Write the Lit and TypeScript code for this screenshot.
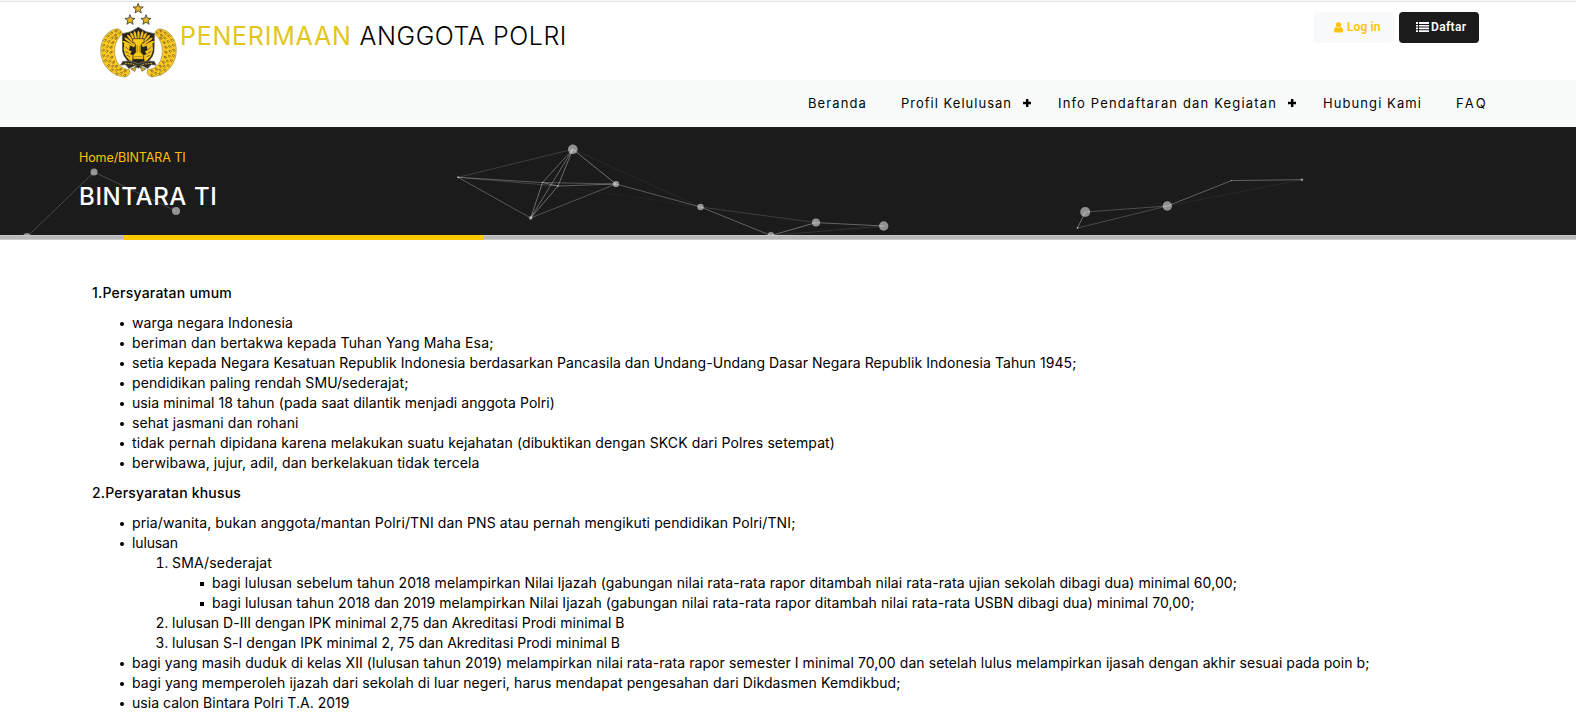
import { LitElement, html, css, svg } from "lit";
import { customElement, property } from "lit/decorators.js";

/** A single line of text whose tracking is adjusted to fill a given width. */
@customElement("fit-text")
class FitText extends LitElement {
  @property() text = "";
  @property({ type: Number }) width = 0;

  static styles = css`
    :host { display: inline-block; white-space: pre; }
    .t { display: inline-block; }
  `;

  updated() {
    const el = this.renderRoot.querySelector(".t") as HTMLElement;
    el.style.letterSpacing = "0px";
    const natural = el.getBoundingClientRect().width;
    el.style.letterSpacing = (this.width + 0.5 - natural) / this.text.length + "px";
  }

  render() {
    return html`<span class="t">${this.text}</span>`;
  }
}

const fit = (text: string, width: number) =>
  html`<fit-text .text=${text} .width=${width}></fit-text>`;

const general: [string, number][] = [
  ["warga negara Indonesia", 160.5],
  ["beriman dan bertakwa kepada Tuhan Yang Maha Esa;", 361],
  ["setia kepada Negara Kesatuan Republik Indonesia berdasarkan Pancasila dan Undang-Undang Dasar Negara Republik Indonesia Tahun 1945;", 944],
  ["pendidikan paling rendah SMU/sederajat;", 276],
  ["usia minimal 18 tahun (pada saat dilantik menjadi anggota Polri)", 422.5],
  ["sehat jasmani dan rohani", 166],
  ["tidak pernah dipidana karena melakukan suatu kejahatan (dibuktikan dengan SKCK dari Polres setempat)", 702.5],
  ["berwibawa, jujur, adil, dan berkelakuan tidak tercela", 347],
];

/* Particle network: x, y (relative to the banner), radius */
const nodes: [number, number, number][] = [
  [27, 110, 4], [94, 45, 3.5], [176, 84, 4],
  [572.8, 22.3, 4.8], [458, 50.3, 1], [616, 57, 3.1], [530.7, 91, 1.8],
  [542.5, 55.5, 0.6], [558, 59, 0.8], [700.5, 80, 3.2], [771, 108.5, 3.4],
  [816, 95.6, 4], [883.7, 99, 4.7],
  [1085.2, 85, 5], [1167.3, 79, 4.7], [1077.5, 101, 0.9], [1231.5, 53.6, 0.7], [1302, 52.7, 1.2],
];
const links: [number, number, number][] = [
  [0, 1, 0.2], [1, 2, 0.2],
  [4, 3, 0.15], [4, 7, 0.27], [4, 8, 0.18], [4, 6, 0.27], [3, 5, 0.37], [3, 7, 0.32],
  [3, 8, 0.36], [3, 6, 0.32], [6, 7, 0.36], [6, 8, 0.36], [6, 5, 0.25], [7, 5, 0.26],
  [8, 5, 0.3], [7, 8, 0.35], [5, 9, 0.28], [3, 9, 0.06], [8, 9, 0.03], [9, 11, 0.15],
  [9, 10, 0.3], [10, 11, 0.36], [10, 12, 0.11], [11, 12, 0.32],
  [13, 14, 0.22], [13, 15, 0.36], [15, 14, 0.2], [14, 16, 0.3], [16, 17, 0.3], [14, 17, 0.06],
];

const star = (cx: number, cy: number, r: number) => {
  const pts: string[] = [];
  for (let i = 0; i < 10; i++) {
    const a = (Math.PI / 5) * i - Math.PI / 2;
    const q = i % 2 ? r * 0.42 : r;
    pts.push(`${(cx + Math.cos(a) * q).toFixed(1)},${(cy + Math.sin(a) * q).toFixed(1)}`);
  }
  return svg`<polygon points=${pts.join(" ")} fill="#e5b622" stroke="#34332a" stroke-width="2.4"/>`;
};

/* Left branch; the right one is its mirror image. */
const branch = () => svg`
  <path d="M82 86C50 90 32 120 32 150C32 192 60 226 104 231C116 229 122 220 118 209C92 208 74 186 74 154C74 132 82 114 98 101Q94 88 82 86Z"
    fill="#fbc920" stroke="#8a7a45" stroke-width="1.6"/>
  ${[
    [78, 93], [88, 99], [64, 100], [76, 106], [54, 108], [66, 114], [78, 115], [45, 121], [56, 125], [68, 128],
    [40, 136], [51, 140], [63, 142], [39, 151], [50, 154], [63, 157], [40, 167], [52, 169], [65, 172], [46, 182],
    [58, 184], [70, 187], [55, 197], [67, 199], [79, 199], [66, 210], [79, 211], [91, 208], [80, 222], [93, 220],
    [105, 213], [104, 226],
  ].map(([x, y], i) => svg`<path d=${`M${x - 5} ${y + 2}q4 -7 9 -5q0 6 -6 7`} fill=${i % 3 ? "#ffcf2c" : "#d9a824"} stroke="#4a4225" stroke-width="1.5"/>`)}
`;

const emblem = html`
  <svg class="emblem" viewBox="0 0 300 246" aria-hidden="true">
    ${star(144.5, 26, 16)}${star(120, 60, 16)}${star(168, 60, 16)}
    ${branch()}
    <g transform="translate(291 0) scale(-1 1)">${branch()}</g>
    <path d="M97 101Q122 99 145 82Q168 99 193 101L192 155Q187 184 145 202Q103 184 98 155Z" fill="#25241e" stroke="#4d4937" stroke-width="2"/>
    ${[-66, -53, -40, -27, -14, 0, 14, 27, 40, 53, 66].map(
      (d) => svg`<path d="M143.2 132L142 98L145.5 91L149 98L147.8 132Z" fill="#f2bd20" transform=${`rotate(${d} 145.5 145)`}/>`
    )}
    <path d="M103 124L120 137L117 151L125 154L120 163L130 166L126 185Q106 176 101 149ZM187 124L170 137L173 151L165 154L170 163L160 166L164 185Q184 176 189 149Z" fill="#f7c31f"/>
    <path d="M107 140L115 149M106 154L117 160M111 166L120 170M183 140L175 149M184 154L173 160M179 166L170 170" stroke="#2b2a20" stroke-width="1.8"/>
    <path d="M128 116H162V128H157L153 136V157L161 166V178H129V166L137 157V136L133 128H128Z" fill="#fdc920" stroke="#2a281e" stroke-width="2.2"/>
    <path d="M142 137V158M149 137V158M132 170H158" stroke="#93701b" stroke-width="2"/>
    <path d="M98 184Q121 179 145 191Q169 179 193 184L199 196L184 194L173 206L157 198L145 205L133 198L117 206L106 194L91 196Z" fill="#34332a" stroke="#8c8570" stroke-width="1.8"/>
    <path d="M105 190L128 192L139 197M186 190L162 192L151 197" stroke="#d5ab2a" stroke-width="3" fill="none" stroke-dasharray="5 3"/>
    <path d="M123 207L139 201L134 214ZM167 207L151 201L156 214Z" fill="#e8b71f" stroke="#57502f" stroke-width="2"/>
  </svg>
`;

const plus = html`<svg class="plus" viewBox="0 0 8 8"><path d="M3 0h2.4v2.8H8v2.4H5.4V8H3V5.2H0V2.8h3z"/></svg>`;

@customElement("app-root")
class AppRoot extends LitElement {
  static styles = css`
    :host {
      display: block;
      height: 712px;
      overflow: hidden;
      background: #fff;
      color: #000;
      font-family: Inter, "Open Sans", sans-serif;
      font-size: 14px;
      line-height: 20px;
    }
    .top {
      box-sizing: border-box;
      height: 80px;
      padding: 0 97px 0 90px;
      display: flex;
      align-items: flex-start;
      background: linear-gradient(#f8f9f9 1px, #dedfdf 1px, #dedfdf 2px, #fff 2px);
    }
    .emblem { display: block; width: 100px; height: 82px; flex: none; margin-right: -10px; }
    .brand {
      display: flex;
      gap: 8px;
      padding-top: 21px;
      font-size: 25px;
      font-weight: 300;
      line-height: 31px;
    }
    .gold { color: #e2c61d; font-weight: 400; }
    .buttons { display: flex; gap: 5px; margin-left: auto; padding-top: 12px; }
    .btn {
      box-sizing: border-box;
      width: 80px;
      height: 31px;
      border-radius: 4px;
      display: flex;
      align-items: center;
      font: 600 12px/31px Roboto, sans-serif;
    }
    .login { background: #f8f9fa; color: #ffc107; padding-left: 20px; gap: 4px; }
    .register { background: #1b1b1b; color: #fff; padding-left: 17px; gap: 2px; }
    .btn svg { display: block; fill: currentColor; }
    .nav {
      box-sizing: border-box;
      height: 47px;
      background: #f8faf9;
      display: flex;
      justify-content: flex-end;
      align-items: center;
      gap: 34px;
      padding: 0 88px 1px 0;
      font-size: 13px;
      color: #050505;
    }
    .item { display: flex; align-items: center; gap: 11px; }
    .plus { width: 8px; height: 8px; display: block; fill: #000; margin: 0 -7px 0 0; }
    .banner {
      height: 108px;
      box-sizing: border-box;
      padding: 21px 0 0 79px;
      background: #1b1b1b;
      position: relative;
      overflow: hidden;
      color: #fff;
    }
    .net { position: absolute; inset: 0; width: 1576px; height: 108px; }
    .crumb { position: relative; color: #ffc107; font-size: 12.5px; line-height: 20px; }
    .title { position: relative; margin: 13px 0 0 0; font-size: 24px; line-height: 32px; font-weight: 500; }
    .bar {
      height: 5px;
      background: linear-gradient(#c9c9c9 1px, #b8b8b8 1px, #b8b8b8 4px, #cdcdcd 4px);
      display: flex;
      padding-left: 123px;
    }
    .fill { width: 360px; background: #ffc800; }
    .content { padding: 43px 92px 0; }
    h4 { margin: 0 0 10px; font-size: 14px; font-weight: 500; line-height: 20px; }
    ul, ol { margin: 0; padding-left: 40px; }
    ul { list-style: none; }
    .content > ul { margin-bottom: 10px; }
    ul > li::before {
      content: "";
      display: inline-block;
      width: 4px;
      height: 4px;
      margin: 9px 8px 0 -12px;
      border-radius: 50%;
      background: #000;
      vertical-align: top;
    }
    .square > li::before { margin: 9px 8px 0 -12px; border-radius: 0; }
    .content fit-text { vertical-align: top; height: 20px; }
  `;

  render() {
    return html`
      <header class="top">
        ${emblem}
        <div class="brand">
          <span class="gold">${fit("PENERIMAAN", 171)}</span>
          <span>${fit("ANGGOTA POLRI", 207)}</span>
        </div>
        <div class="buttons">
          <a class="btn login">
            <svg width="9" height="11" viewBox="0 0 9 11"><circle cx="4.5" cy="2.8" r="2.6" /><path d="M2 5Q4.5 7 7 5Q9 5.6 9 9Q9 10.6 7.5 10.6H1.5Q0 10.6 0 9Q0 5.6 2 5z" /></svg>
            ${fit("Log in", 33)}
          </a>
          <a class="btn register">
            <svg width="13" height="11" viewBox="0 0 13 11"><path d="M0 0h2v2H0zM3 0h10v2H3zM0 3h2v1.6H0zM3 3h10v1.6H3zM0 5.6h2v1.6H0zM3 5.6h10v1.6H3zM0 8.2h2v1.8H0zM3 8.2h10v1.8H3z" /></svg>
            ${fit("Daftar", 35)}
          </a>
        </div>
      </header>
      <nav class="nav">
        <span class="item">${fit("Beranda", 58.5)}</span>
        <span class="item">${fit("Profil Kelulusan", 110.5)}${plus}</span>
        <span class="item">${fit("Info Pendaftaran dan Kegiatan", 218.5)}${plus}</span>
        <span class="item">${fit("Hubungi Kami", 98.5)}</span>
        <span class="item">${fit("FAQ", 31.5)}</span>
      </nav>
      <section class="banner">
        <svg class="net" viewBox="0 0 1576 108">
          ${links.map(
            ([a, b, o]) => svg`<line x1=${nodes[a][0]} y1=${nodes[a][1]} x2=${nodes[b][0]} y2=${nodes[b][1]} stroke="#fff" stroke-opacity=${o}/>`
          )}
          ${nodes.map(([x, y, r]) => svg`<circle cx=${x} cy=${y} r=${r} fill="#fff" fill-opacity="0.52"/>`)}
        </svg>
        <div class="crumb">${fit("Home/BINTARA TI", 106)}</div>
        <h1 class="title">${fit("BINTARA TI", 138)}</h1>
      </section>
      <div class="bar"><div class="fill"></div></div>
      <main class="content">
        <h4>${fit("1.Persyaratan umum", 139.5)}</h4>
        <ul>
          ${general.map(([t, w]) => html`<li>${fit(t, w)}</li>`)}
        </ul>
        <h4>${fit("2.Persyaratan khusus", 148.5)}</h4>
        <ul>
          <li>${fit("pria/wanita, bukan anggota/mantan Polri/TNI dan PNS atau pernah mengikuti pendidikan Polri/TNI;", 663)}</li>
          <li>${fit("lulusan", 45.5)}
            <ol>
              <li>${fit("SMA/sederajat", 99.5)}
                <ul class="square">
                  <li>${fit("bagi lulusan sebelum tahun 2018 melampirkan Nilai Ijazah (gabungan nilai rata-rata rapor ditambah nilai rata-rata ujian sekolah dibagi dua) minimal 60,00;", 1024.5)}</li>
                  <li>${fit("bagi lulusan tahun 2018 dan 2019 melampirkan Nilai Ijazah (gabungan nilai rata-rata rapor ditambah nilai rata-rata USBN dibagi dua) minimal 70,00;", 982)}</li>
                </ul>
              </li>
              <li>${fit("lulusan D-III dengan IPK minimal 2,75 dan Akreditasi Prodi minimal B", 452)}</li>
              <li>${fit("lulusan S-I dengan IPK minimal 2, 75 dan Akreditasi Prodi minimal B", 447.5)}</li>
            </ol>
          </li>
          <li>${fit("bagi yang masih duduk di kelas XII (lulusan tahun 2019) melampirkan nilai rata-rata rapor semester I minimal 70,00 dan setelah lulus melampirkan ijasah dengan akhir sesuai pada poin b;", 1237)}</li>
          <li>${fit("bagi yang memperoleh ijazah dari sekolah di luar negeri, harus mendapat pengesahan dari Dikdasmen Kemdikbud;", 768)}</li>
          <li>${fit("usia calon Bintara Polri T.A. 2019", 217)}</li>
        </ul>
      </main>
    `;
  }
}
